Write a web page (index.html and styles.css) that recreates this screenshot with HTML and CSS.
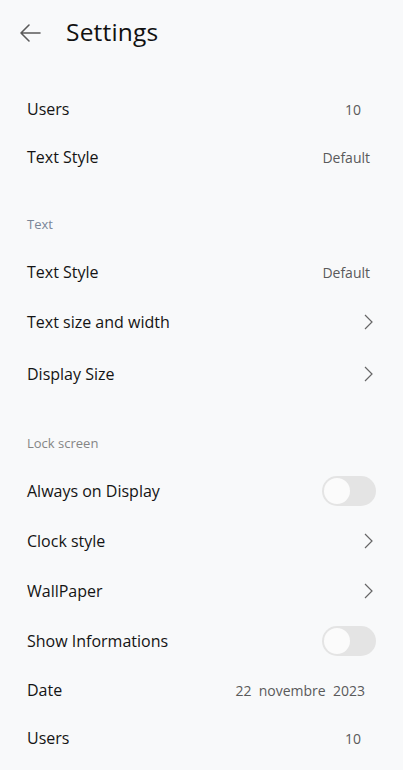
FILE: index.html
```html
<!DOCTYPE html>
<html>
<head>
<meta charset="utf-8">
<link rel="stylesheet" href="styles.css">
</head>
<body>
<div class="page">
  <header class="topbar">
    <svg class="back" width="22" height="20" viewBox="0 0 22 20"><path d="M21 10H2M10 2L2 10l8 8" fill="none" stroke="#5a5a5a" stroke-width="1.6" stroke-linecap="round" stroke-linejoin="round"/></svg>
    <h1 class="title">Settings</h1>
  </header>

  <section class="group group-first">
    <div class="row row-48"><span class="label">Users</span><span class="value v-num">10</span></div>
    <div class="row row-48"><span class="label">Text Style</span><span class="value v-def">Default</span></div>
  </section>

  <section class="group">
    <div class="section-title section-blue">Text</div>
    <div class="row"><span class="label">Text Style</span><span class="value v-def">Default</span></div>
    <div class="row"><span class="label">Text size and width</span><svg class="chev" width="9" height="16" viewBox="0 0 9 16"><path d="M1 1l7 7-7 7" fill="none" stroke="#666" stroke-width="1.2"/></svg></div>
    <div class="row row-52"><span class="label">Display Size</span><svg class="chev" width="9" height="16" viewBox="0 0 9 16"><path d="M1 1l7 7-7 7" fill="none" stroke="#666" stroke-width="1.2"/></svg></div>
  </section>

  <section class="group">
    <div class="section-title section-gray">Lock screen</div>
    <div class="row"><span class="label">Always on Display</span><span class="toggle"><span class="knob"></span></span></div>
    <div class="row"><span class="label">Clock style</span><svg class="chev" width="9" height="16" viewBox="0 0 9 16"><path d="M1 1l7 7-7 7" fill="none" stroke="#666" stroke-width="1.2"/></svg></div>
    <div class="row"><span class="label">WallPaper</span><svg class="chev" width="9" height="16" viewBox="0 0 9 16"><path d="M1 1l7 7-7 7" fill="none" stroke="#666" stroke-width="1.2"/></svg></div>
    <div class="row"><span class="label">Show Informations</span><span class="toggle"><span class="knob"></span></span></div>
    <div class="row row-48"><span class="label">Date</span><span class="value v-date">22&nbsp; novembre&nbsp; 2023</span></div>
    <div class="row row-48"><span class="label">Users</span><span class="value v-num">10</span></div>
  </section>
</div>
</body>
</html>
```

FILE: styles.css
```css
html, body {
  margin: 0;
  padding: 0;
  background: #f8f9fa;
}
body {
  font-family: "Open Sans", "Noto Sans", sans-serif;
  color: #141414;
  width: 403px;
  height: 770px;
  overflow: hidden;
}
.page {
  display: flex;
  flex-direction: column;
}
.topbar {
  height: 66px;
  display: flex;
  align-items: center;
  padding-left: 19px;
}
.back {
  display: block;
}
.title {
  margin: 0 0 3px 25px;
  font-size: 24.5px;
  font-weight: 400;
  color: #111;
  letter-spacing: 0.2px;
}
.group {
  display: flex;
  flex-direction: column;
  padding: 0 28px 0 27px;
}
.group-first {
  margin-top: 19px;
}
.section-title {
  font-size: 13px;
  line-height: 16px;
  padding-top: 35px;
  padding-bottom: 15px;
}
.section-blue { color: #7a8698; }
.section-gray { color: #858585; padding-top: 36px; }
.row {
  height: 50px;
  display: flex;
  align-items: center;
  justify-content: space-between;
}
.row-48 { height: 48px; }
.row-52 { height: 52px; padding-top: 2px; box-sizing: border-box; }
.label {
  font-size: 16px;
  color: #141414;
}
.value {
  font-size: 14px;
  color: #5a5a5a;
}
.v-num { margin-right: 14px; }
.v-def { margin-right: 5px; }
.v-date { margin-right: 10px; }
.chev {
  margin-right: 2px;
}
.toggle {
  width: 54px;
  height: 30px;
  border-radius: 15px;
  background: #e4e4e4;
  display: flex;
  align-items: center;
  padding-left: 2px;
  box-sizing: border-box;
  margin-right: -1px;
}
.knob {
  width: 26px;
  height: 26px;
  border-radius: 50%;
  background: #fbfbfb;
}
```
